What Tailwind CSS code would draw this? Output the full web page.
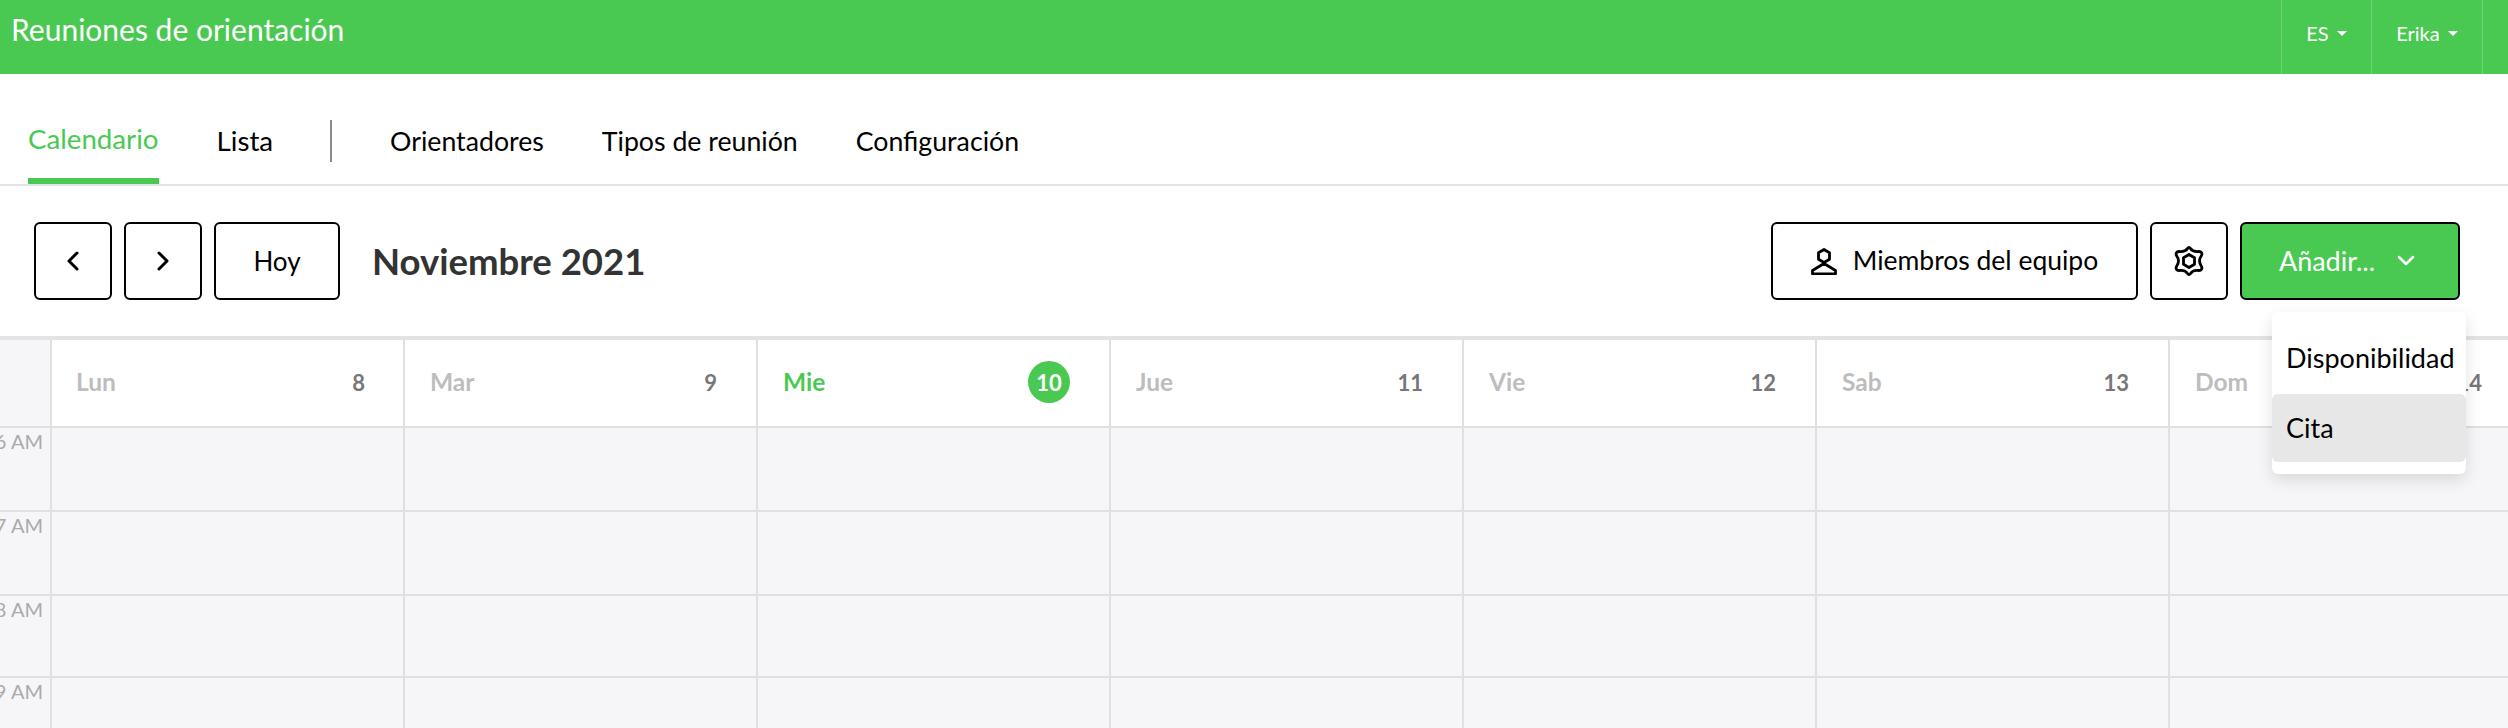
<!DOCTYPE html>
<html lang="es">
<head>
<meta charset="utf-8">
<script src="https://cdn.jsdelivr.net/npm/@tailwindcss/browser@4"></script>
</head>
<body class="h-[728px] w-[2508px] overflow-hidden bg-white font-['Lato','Noto_Sans',sans-serif] text-black">
<div class="relative h-[728px] w-[2508px] overflow-hidden">
  <header class="flex h-[74px] items-start justify-between bg-[#4ac952] text-white">
    <div class="pl-[11px] pt-[11px] text-[30px] leading-[36px]">Reuniones de orientación</div>
    <div class="flex h-full pr-[25px] text-[20px]">
      <div class="flex w-[90px] items-start justify-center gap-[8px] border-l border-white/20 pt-[20px] leading-[26px]">ES <span class="mt-[11px] h-0 w-0 border-x-[5px] border-t-[5px] border-x-transparent border-t-white"></span></div>
      <div class="flex w-[112px] items-start justify-center gap-[8px] border-x border-white/20 pt-[20px] leading-[26px]">Erika <span class="mt-[11px] h-0 w-0 border-x-[5px] border-t-[5px] border-x-transparent border-t-white"></span></div>
    </div>
  </header>
  <nav class="flex h-[112px] items-stretch border-b-2 border-[#e3e3e8] pl-[28px] text-[26.700px]">
    <div class="flex h-[110px] items-center border-b-[6px] border-[#4ac952] pt-[26px] text-[27.700px] text-[#4ac952]">Calendario</div>
    <div class="ml-[58px] flex items-center pt-[24px] text-[27.700px]">Lista</div>
    <div class="ml-[57px] mr-[58px] mt-[46px] h-[42px] w-[2px] bg-[#8a8a8a]"></div>
    <div class="flex items-center pt-[24px]">Orientadores</div>
    <div class="ml-[58px] flex items-center pt-[24px]">Tipos de reunión</div>
    <div class="ml-[58px] flex items-center pt-[24px]">Configuración</div>
  </nav>
  <div class="flex h-[150px] items-start justify-between pl-[34px] pr-[48px] pt-[36px]">
    <div class="flex items-center">
      <button class="flex h-[78px] w-[78px] items-center justify-center rounded-[6px] border-2 border-black">
        <svg width="14" height="22" viewBox="0 0 14 22" fill="none" stroke="black" stroke-width="3" stroke-linecap="round" stroke-linejoin="round"><path d="M11 3 3 11l8 8"/></svg>
      </button>
      <button class="ml-[12px] flex h-[78px] w-[78px] items-center justify-center rounded-[6px] border-2 border-black">
        <svg width="14" height="22" viewBox="0 0 14 22" fill="none" stroke="black" stroke-width="3" stroke-linecap="round" stroke-linejoin="round"><path d="m3 3 8 8-8 8"/></svg>
      </button>
      <button class="ml-[12px] h-[78px] w-[126px] rounded-[6px] border-2 border-black text-[26px]">Hoy</button>
      <h1 class="ml-[32px] text-[36.500px] font-bold text-[#333]">Noviembre 2021</h1>
    </div>
    <div class="flex items-center gap-[12px]">
      <button class="flex h-[78px] w-[367px] items-center justify-center gap-[16px] rounded-[6px] border-2 border-black text-[26.500px]">
        <svg width="26" height="27" viewBox="0 0 26 27" fill="none" stroke="black" stroke-width="2.800" stroke-linejoin="round"><path d="M13 1.500 18.500 4.700v6.600L13 14.500 7.500 11.300V4.700z"/><path d="M13 15.500 1.500 22.500v3.300h23v-3.300z"/></svg>
        <span>Miembros del equipo</span>
      </button>
      <button class="flex h-[78px] w-[78px] items-center justify-center rounded-[6px] border-2 border-black">
        <svg width="30" height="32" viewBox="0 0 30 32" fill="none" stroke="black" stroke-width="2.800" stroke-linejoin="round"><path d="M13.500 3.500C14.500 2 15.500 2 16.500 3.500 18 6 20.500 7 25 6.500 27.500 6.500 28.500 8.500 27.500 10.500 25 14 25 18 27.500 21.500 28.500 23.500 27.500 25.500 25 25.500 20.500 25 18 26 16.500 28.500 15.500 30 14.500 30 13.500 28.500 12 26 9.500 25 5 25.500 2.500 25.500 1.500 23.500 2.500 21.500 5 18 5 14 2.500 10.500 1.500 8.500 2.500 6.500 5 6.500 9.500 7 12 6 13.500 3.500z"/><path d="M15 9.500 20.500 12.700V19.300L15 22.500 9.500 19.300V12.700z"/></svg>
      </button>
      <button class="flex h-[78px] w-[220px] items-center justify-center gap-[22px] rounded-[6px] border-2 border-black bg-[#4ac952] pr-[6px] text-[27px] text-white">
        <span>Añadir...</span>
        <svg width="18" height="12" viewBox="0 0 18 12" fill="none" stroke="white" stroke-width="2.500" stroke-linecap="round" stroke-linejoin="round"><path d="m2 2 7 7 7-7"/></svg>
      </button>
    </div>
  </div>
  <div class="grid w-[2522px] grid-cols-[50px_repeat(7,353px)] grid-rows-[88px_84px_84px_82px_84px] border-t-4 border-[#e3e3e6]">
    <div class="border-b-2 border-[#e0e0e3] bg-[#f6f6f8]"></div>
    <div class="flex items-center justify-between border-b-2 border-l-2 border-[#e0e0e3] pb-[2px] pl-[24px] pr-[38px] text-[22px] font-bold"><span class="text-[24.500px] text-[#bdbdbd]">Lun</span><span class="text-[#777]">8</span></div>
    <div class="flex items-center justify-between border-b-2 border-l-2 border-[#e0e0e3] pb-[2px] pl-[25px] pr-[39px] text-[22px] font-bold"><span class="text-[24.500px] text-[#bdbdbd]">Mar</span><span class="text-[#777]">9</span></div>
    <div class="flex items-center justify-between border-b-2 border-l-2 border-[#e0e0e3] pb-[2px] pl-[25px] pr-[39px] text-[22px] font-bold"><span class="text-[24.500px] text-[#4ac952]">Mie</span><span class="flex h-[42px] w-[42px] items-center justify-center rounded-full bg-[#4ac952] text-white">10</span></div>
    <div class="flex items-center justify-between border-b-2 border-l-2 border-[#e0e0e3] pb-[2px] pl-[25px] pr-[39px] text-[22px] font-bold"><span class="text-[24.500px] text-[#bdbdbd]">Jue</span><span class="text-[#777]">11</span></div>
    <div class="flex items-center justify-between border-b-2 border-l-2 border-[#e0e0e3] pb-[2px] pl-[25px] pr-[39px] text-[22px] font-bold"><span class="text-[24.500px] text-[#bdbdbd]">Vie</span><span class="text-[#777]">12</span></div>
    <div class="flex items-center justify-between border-b-2 border-l-2 border-[#e0e0e3] pb-[2px] pl-[25px] pr-[39px] text-[22px] font-bold"><span class="text-[24.500px] text-[#bdbdbd]">Sab</span><span class="text-[#777]">13</span></div>
    <div class="flex items-center justify-between border-b-2 border-l-2 border-[#e0e0e3] pb-[2px] pl-[25px] pr-[39px] text-[22px] font-bold"><span class="text-[24.500px] text-[#bdbdbd]">Dom</span><span class="text-[#777]">14</span></div>

    <div class="flex justify-end overflow-hidden whitespace-nowrap border-b-2 border-[#e0e0e3] bg-[#f6f6f8] pr-[7px] text-[20px] leading-[26px] text-[#aaa]">6 AM</div>
    <div class="border-b-2 border-l-2 border-[#e0e0e3] bg-[#f6f6f8]"></div><div class="border-b-2 border-l-2 border-[#e0e0e3] bg-[#f6f6f8]"></div><div class="border-b-2 border-l-2 border-[#e0e0e3] bg-[#f6f6f8]"></div><div class="border-b-2 border-l-2 border-[#e0e0e3] bg-[#f6f6f8]"></div><div class="border-b-2 border-l-2 border-[#e0e0e3] bg-[#f6f6f8]"></div><div class="border-b-2 border-l-2 border-[#e0e0e3] bg-[#f6f6f8]"></div><div class="border-b-2 border-l-2 border-[#e0e0e3] bg-[#f6f6f8]"></div>

    <div class="flex justify-end overflow-hidden whitespace-nowrap border-b-2 border-[#e0e0e3] bg-[#f6f6f8] pr-[7px] text-[20px] leading-[26px] text-[#aaa]">7 AM</div>
    <div class="border-b-2 border-l-2 border-[#e0e0e3] bg-[#f6f6f8]"></div><div class="border-b-2 border-l-2 border-[#e0e0e3] bg-[#f6f6f8]"></div><div class="border-b-2 border-l-2 border-[#e0e0e3] bg-[#f6f6f8]"></div><div class="border-b-2 border-l-2 border-[#e0e0e3] bg-[#f6f6f8]"></div><div class="border-b-2 border-l-2 border-[#e0e0e3] bg-[#f6f6f8]"></div><div class="border-b-2 border-l-2 border-[#e0e0e3] bg-[#f6f6f8]"></div><div class="border-b-2 border-l-2 border-[#e0e0e3] bg-[#f6f6f8]"></div>

    <div class="flex justify-end overflow-hidden whitespace-nowrap border-b-2 border-[#e0e0e3] bg-[#f6f6f8] pr-[7px] text-[20px] leading-[26px] text-[#aaa]">8 AM</div>
    <div class="border-b-2 border-l-2 border-[#e0e0e3] bg-[#f6f6f8]"></div><div class="border-b-2 border-l-2 border-[#e0e0e3] bg-[#f6f6f8]"></div><div class="border-b-2 border-l-2 border-[#e0e0e3] bg-[#f6f6f8]"></div><div class="border-b-2 border-l-2 border-[#e0e0e3] bg-[#f6f6f8]"></div><div class="border-b-2 border-l-2 border-[#e0e0e3] bg-[#f6f6f8]"></div><div class="border-b-2 border-l-2 border-[#e0e0e3] bg-[#f6f6f8]"></div><div class="border-b-2 border-l-2 border-[#e0e0e3] bg-[#f6f6f8]"></div>

    <div class="flex justify-end overflow-hidden whitespace-nowrap bg-[#f6f6f8] pr-[7px] text-[20px] leading-[26px] text-[#aaa]">9 AM</div>
    <div class="border-l-2 border-[#e0e0e3] bg-[#f6f6f8]"></div><div class="border-l-2 border-[#e0e0e3] bg-[#f6f6f8]"></div><div class="border-l-2 border-[#e0e0e3] bg-[#f6f6f8]"></div><div class="border-l-2 border-[#e0e0e3] bg-[#f6f6f8]"></div><div class="border-l-2 border-[#e0e0e3] bg-[#f6f6f8]"></div><div class="border-l-2 border-[#e0e0e3] bg-[#f6f6f8]"></div><div class="border-l-2 border-[#e0e0e3] bg-[#f6f6f8]"></div>
  </div>
  <div class="absolute left-[2272px] top-[312px] h-[162px] w-[194px] rounded-[6px] bg-white text-[27px] shadow-[0_6px_16px_rgba(0,0,0,0.12)]">
    <div class="flex h-[82px] items-end pb-[16px] pl-[14px]">Disponibilidad</div>
    <div class="flex h-[68px] items-center rounded-[6px] bg-[#e7e7e7] pl-[14px]">Cita</div>
  </div>
</div>
</body>
</html>
